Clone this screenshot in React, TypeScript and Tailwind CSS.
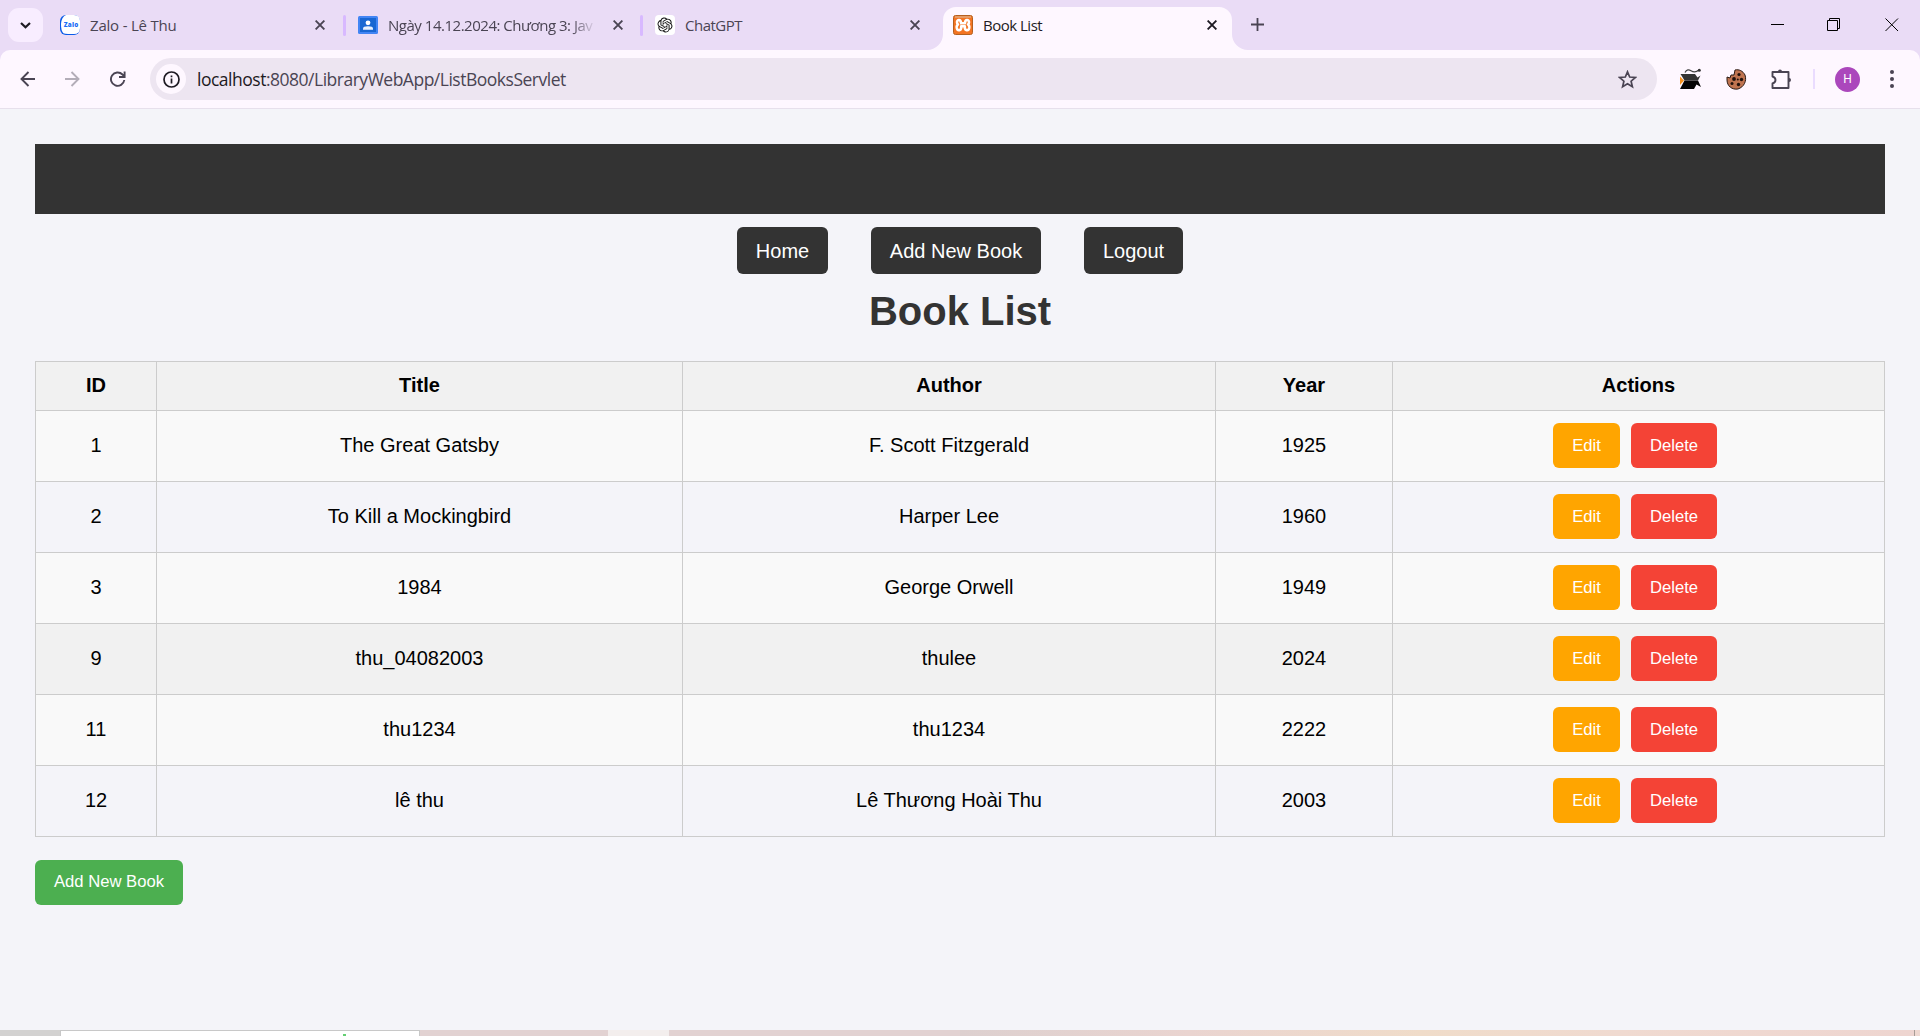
import React from "react";

const books = [
  ["1", "The Great Gatsby", "F. Scott Fitzgerald", "1925"],
  ["2", "To Kill a Mockingbird", "Harper Lee", "1960"],
  ["3", "1984", "George Orwell", "1949"],
  ["9", "thu_04082003", "thulee", "2024"],
  ["11", "thu1234", "thu1234", "2222"],
  ["12", "lê thu", "Lê Thương Hoài Thu", "2003"],
];

const rowColors = [
  "bg-[#f9f9f9]",
  "bg-[#f4f4f9]",
  "bg-[#f9f9f9]",
  "bg-[#f1f1f1]",
  "bg-[#f9f9f9]",
  "bg-[#f4f4f9]",
];

function Close({ color }: { color: string }) {
  return (
    <svg className="h-[10px] w-[10px] shrink-0" viewBox="0 0 10 10" stroke={color} strokeWidth="1.9">
      <path d="M0.6 0.6 9.4 9.4M9.4 0.6 0.6 9.4" />
    </svg>
  );
}

function ZaloIcon() {
  return (
    <svg className="h-5 w-5 shrink-0" viewBox="0 0 20 20">
      <rect width="20" height="20" rx="6" fill="#0a5be8" />
      <path d="M6 0H14Q20 0 20 6V13Q20 19 14 19H8Q5 19 3.4 18.2Q1 16 1 9Q1.500 2 6 0Z" fill="#fff" />
      <text x="3.800" y="12" fontSize="6.300" fontWeight="800" fill="#1a6df5" fontFamily="Open Sans, sans-serif" textLength="14.500">Zalo</text>
    </svg>
  );
}

function ClassroomIcon() {
  return (
    <svg className="h-5 w-5 shrink-0" viewBox="0 0 20 20">
      <rect y="1" width="20" height="18" rx="1.500" fill="#4285f4" />
      <rect x="2" y="3" width="16" height="14" fill="#1967d2" />
      <circle cx="10" cy="7.800" r="2.400" fill="#fff" />
      <path d="M5 14.800V13.500Q5 11.200 10 11.200T15 13.500V14.800Z" fill="#e8f0fe" />
    </svg>
  );
}

function ChatGptIcon() {
  return (
    <svg className="h-5 w-5 shrink-0" viewBox="0 0 20 20">
      <rect width="20" height="20" rx="4" fill="#fff" />
      <g transform="translate(2.500 2.500) scale(.625)">
        <path
          fill="#111"
          d="M22.282 9.821a5.985 5.985 0 0 0-.516-4.910 6.046 6.046 0 0 0-6.510-2.900A6.065 6.065 0 0 0 4.981 4.182a5.985 5.985 0 0 0-3.998 2.900 6.046 6.046 0 0 0 .743 7.097 5.980 5.980 0 0 0 .510 4.911 6.051 6.051 0 0 0 6.515 2.900A5.985 5.985 0 0 0 13.260 24a6.056 6.056 0 0 0 5.772-4.206 5.990 5.990 0 0 0 3.997-2.900 6.056 6.056 0 0 0-.747-7.073zM13.260 22.430a4.476 4.476 0 0 1-2.876-1.040l.141-.081 4.779-2.758a.795.795 0 0 0 .392-.681v-6.737l2.020 1.168a.071.071 0 0 1 .038.052v5.583a4.504 4.504 0 0 1-4.494 4.494zM3.600 18.304a4.470 4.470 0 0 1-.535-3.014l.142.085 4.783 2.759a.771.771 0 0 0 .780 0l5.843-3.369v2.332a.080.080 0 0 1-.033.062L9.740 19.950a4.500 4.500 0 0 1-6.140-1.646zM2.340 7.896a4.485 4.485 0 0 1 2.366-1.973V11.600a.766.766 0 0 0 .388.676l5.815 3.355-2.020 1.168a.076.076 0 0 1-.071 0l-4.830-2.786A4.504 4.504 0 0 1 2.340 7.872zm16.597 3.855l-5.833-3.387L15.119 7.200a.076.076 0 0 1 .071 0l4.830 2.791a4.494 4.494 0 0 1-.676 8.105v-5.678a.790.790 0 0 0-.407-.667zm2.010-3.023l-.141-.085-4.774-2.782a.776.776 0 0 0-.785 0L9.409 9.230V6.897a.066.066 0 0 1 .028-.061l4.830-2.787a4.500 4.500 0 0 1 6.680 4.660zm-12.640 4.135l-2.020-1.164a.080.080 0 0 1-.038-.057V6.075a4.500 4.500 0 0 1 7.375-3.453l-.142.080L8.704 5.460a.795.795 0 0 0-.393.681zm1.097-2.365l2.602-1.500 2.607 1.500v2.999l-2.597 1.500-2.607-1.500z"
        />
      </g>
    </svg>
  );
}

function XamppIcon() {
  return (
    <svg className="h-5 w-5 shrink-0" viewBox="0 0 20 20">
      <rect x=".5" y=".5" width="19" height="19" rx="2" fill="#f37423" stroke="#b5601f" />
      <path d="M2 2H18" stroke="#e59b66" strokeWidth="2" />
      <g fill="none" stroke="#fff" strokeWidth="2.600" strokeLinejoin="round">
        <path d="M8 8.200C8 4 3.800 4.300 4 7.300C4 9 5 9.500 5 9.500C3.500 10.500 3.500 11.500 3.800 13C4.600 16.500 8.200 15.500 8.200 12.500V11.200H11.800V12.500C11.800 15.500 15.400 16.500 16.200 13C16.500 11.500 16.500 10.500 15 9.500C15 9.500 16 9 16 7.300C16.200 4.300 12 4 12 8.200H7" />
      </g>
    </svg>
  );
}

function Divider() {
  return <div className="h-[21px] w-[3px] shrink-0 rounded-full bg-[#d8b9ff]" />;
}

function TabStrip() {
  return (
    <div className="flex h-[50px] bg-[#eadcf6] text-[15px] text-[#4a4453]">
      <div className="mt-2 ml-2 flex h-[34px] w-[35px] items-center justify-center rounded-[11px] bg-[#f8edff]">
        <svg className="h-[7px] w-[11px]" viewBox="0 0 11 7" fill="none" stroke="#1d1a22" strokeWidth="2.200">
          <path d="M1 1 5.500 5.300 10 1" />
        </svg>
      </div>
      <div className="ml-[17px] flex h-[50px] w-[286px] items-center">
        <ZaloIcon />
        <span className="ml-[10px] flex-1 whitespace-nowrap tracking-[-0.2px]">Zalo - Lê Thu</span>
        <Close color="#4a4453" />
        <div className="w-[18px]" />
        <Divider />
      </div>
      <div className="flex h-[50px] w-[297px] items-center pl-[12px]">
        <ClassroomIcon />
        <span className="ml-[10px] w-[208px] overflow-hidden whitespace-nowrap tracking-[-0.48px] [mask-image:linear-gradient(to_right,black_88%,transparent)]">
          Ngày 14.12.2024: Chương 3: Jav
        </span>
        <div className="w-[17px]" />
        <Close color="#4a4453" />
        <div className="w-[17px]" />
        <Divider />
      </div>
      <div className="flex h-[50px] w-[300px] items-center pl-[12px]">
        <ChatGptIcon />
        <span className="ml-[10px] w-[225px] tracking-[-0.5px]">ChatGPT</span>
        <Close color="#4a4453" />
      </div>
      <div className="relative mt-[7px] flex h-[43px] w-[289px] items-center rounded-t-[13px] bg-[#fef7ff] pb-[7px] pl-[10px] text-[#1d1a22]">
        <svg className="absolute bottom-0 -left-4 h-4 w-4" viewBox="0 0 16 16" fill="#fef7ff">
          <path d="M16 0V16H0A16 16 0 0 0 16 0Z" />
        </svg>
        <svg className="absolute -right-4 bottom-0 h-4 w-4" viewBox="0 0 16 16" fill="#fef7ff">
          <path d="M0 0V16H16A16 16 0 0 1 0 0Z" />
        </svg>
        <XamppIcon />
        <span className="ml-[10px] flex-1 tracking-[-0.5px]">Book List</span>
        <Close color="#1d1a22" />
        <div className="w-[15px]" />
      </div>
      <svg className="mt-[18px] ml-[19px] h-[13px] w-[13px]" viewBox="0 0 13 13" stroke="#4a4453" strokeWidth="1.800">
        <path d="M6.500 0V13M0 6.500H13" />
      </svg>
      <div className="flex-1" />
      <div className="mr-[21px] flex h-[50px] items-center">
        <svg className="h-[14px] w-[128px]" viewBox="0 0 128 14" fill="none" stroke="#000" strokeWidth="1">
          <path d="M0 6.500H13" />
          <path d="M56.500 2.500H66.500V12.500H56.500ZM58.500 2.500V.5H68.500V10.500H66.500" />
          <path d="M114.500 .5 127 13M127 .5 114.500 13" />
        </svg>
      </div>
    </div>
  );
}

function Toolbar() {
  return (
    <div className="bg-[#eadcf6]">
      <div className="flex h-[59px] items-center rounded-t-[10px] border-b border-[#e7e0ec] bg-[#fef7ff]">
        <svg className="ml-5 h-4 w-[106px]" viewBox="0 0 106 16" fill="none" strokeWidth="1.900">
          <path d="M15 8H1.500M8.500 1 1.500 8 8.500 15" stroke="#4a4453" />
          <path d="M45 8H58.500M51.500 1 58.500 8 51.500 15" stroke="#b3adb8" />
          <path d="M104.300 9A6.700 6.700 0 1 1 102.500 3.500L104.500 5.500M104.600 .5V6H99" stroke="#4a4453" />
        </svg>
        <div className="ml-6 flex h-[42px] w-[1507px] items-center rounded-full bg-[#ede5f1] pr-5 pl-[6px]">
          <div className="flex h-[30px] w-[30px] items-center justify-center rounded-full bg-[#fef7ff]">
            <svg className="h-[17px] w-[17px]" viewBox="0 0 17 17" fill="none" stroke="#1d1a22" strokeWidth="1.700">
              <circle cx="8.500" cy="8.500" r="7.500" />
              <path d="M8.500 7.500V12.500M8.500 4.500V6.200" />
            </svg>
          </div>
          <span className="ml-[11px] flex-1 text-[17.5px] tracking-[-0.49px] text-[#4a4453]">
            <span className="text-[#1d1a22]">localhost</span>:8080/LibraryWebApp/ListBooksServlet
          </span>
          <svg className="h-[19px] w-[19px]" viewBox="0 0 19 19" fill="none" stroke="#4a4453" strokeWidth="1.700">
            <path d="M9.500 1.800 11.700 7 17.300 7.500 13.100 11.200 14.400 16.700 9.500 13.800 4.600 16.700 5.900 11.200 1.700 7.500 7.300 7Z" />
          </svg>
        </div>
        <svg className="ml-[23px] h-[22px] w-[22px]" viewBox="0 0 22 22">
          <path d="M0 8.500 4 12.500 0 17Z" fill="#f7931e" />
          <path d="M4.500 12.500H18L21 19 16.500 16.500 14 21H0Z" fill="#050505" />
          <path d="M.5 6H15L17.500 9.500 20.500 7.500 18 12.500H4.500Z" fill="#333" />
          <path d="M5 4.500C6.500 1.200 9 1.300 11 2.700S16 4.500 19 2" fill="none" stroke="#444" strokeWidth="1.200" />
          <circle cx="19.300" cy="2.200" r="1.500" fill="#333" />
        </svg>
        <svg className="ml-6 h-[21px] w-[21px]" viewBox="0 0 21 21">
          <path d="M9 1C13 0 17 2 19 6C21 12 18 18 12 20C6 21 1 17 1 11V8L4 9 5 6 8 6Z" fill="#bf7450" stroke="#2b1a14" strokeWidth="1" />
          <g fill="#20110c">
            <circle cx="13" cy="5.500" r="1.600" />
            <circle cx="8" cy="10" r="1.900" />
            <circle cx="15.500" cy="10.500" r="1.700" />
            <circle cx="6" cy="14.500" r="1.500" />
            <circle cx="12.500" cy="15.500" r="1.700" />
            <circle cx="11.800" cy="10.500" r="1" />
          </g>
        </svg>
        <svg className="ml-[24px] h-[21px] w-[21px]" viewBox="0 0 21 21" fill="none" stroke="#4a4453" strokeWidth="1.900" strokeLinejoin="round">
          <path d="M1.500 3H17.500V19H1.500V14.500Q4.500 13.500 4.500 11T1.500 7.500Z" />
          <path d="M7 2.500A2 2 0 0 1 11 2.500ZM18 9A2 2 0 0 1 18 13Z" fill="#4a4453" stroke="none" />
        </svg>
        <div className="ml-[21px] h-5 w-[2px] bg-[#eadcff]" />
        <div className="ml-5 flex h-[25px] w-[25px] items-center justify-center rounded-full bg-[#ab47bc] font-[Roboto] text-[12px] text-white">
          H
        </div>
        <svg className="ml-[30px] h-[18px] w-1" viewBox="0 0 4 18" fill="#4a4453">
          <circle cx="2" cy="2" r="2" />
          <circle cx="2" cy="9" r="2" />
          <circle cx="2" cy="16" r="2" />
        </svg>
      </div>
    </div>
  );
}

export default function App() {
  const cell = "border-r border-b border-[#cccccc] p-0 pb-[2px]";
  return (
    <div className="flex h-[1036px] w-[1920px] flex-col overflow-hidden bg-[#f4f4f9] font-['Open_Sans',sans-serif]">
      <TabStrip />
      <Toolbar />
      <main className="flex-1 px-[35px] pt-[35px] font-['Liberation_Sans',sans-serif] text-[20px] leading-[23px] text-black">
        <div className="h-[70px] bg-[#333333]" />
        <nav className="mt-[13px] flex justify-center gap-[43px] text-white">
          <a className="flex h-[47px] w-[91px] items-center justify-center rounded-[6px] bg-[#333333] pt-[2px]">Home</a>
          <a className="flex h-[47px] w-[170px] items-center justify-center rounded-[6px] bg-[#333333] pt-[2px]">Add New Book</a>
          <a className="flex h-[47px] w-[99px] items-center justify-center rounded-[6px] bg-[#333333] pt-[2px]">Logout</a>
        </nav>
        <h1 className="mt-[14px] text-center text-[40px] leading-[46px] font-bold text-[#333333]">Book List</h1>
        <table className="mt-[27px] w-[1850px] table-fixed border-separate border-spacing-0 border-t border-l border-[#cccccc] text-center">
          <colgroup>
            <col className="w-[121px]" />
            <col className="w-[526px]" />
            <col className="w-[533px]" />
            <col className="w-[177px]" />
            <col />
          </colgroup>
          <thead>
            <tr className="h-[49px] bg-[#f1f1f1]">
              {["ID", "Title", "Author", "Year", "Actions"].map((h) => (
                <th key={h} className={cell}>{h}</th>
              ))}
            </tr>
          </thead>
          <tbody>
            {books.map((b, i) => (
              <tr key={b[0]} className={"h-[71px] " + rowColors[i]}>
                {b.map((v, j) => (
                  <td key={j} className={cell}>{v}</td>
                ))}
                <td className={cell}>
                  <div className="flex justify-center gap-[11px] pr-[7px] text-[16.67px] text-white">
                    <a className="flex h-[45px] w-[67px] items-center justify-center rounded-[6px] bg-[#ffa500]">Edit</a>
                    <a className="flex h-[45px] w-[86px] items-center justify-center rounded-[6px] bg-[#f44336]">Delete</a>
                  </div>
                </td>
              </tr>
            ))}
          </tbody>
        </table>
        <a className="mt-[23px] flex h-[45px] w-[148px] items-center justify-center rounded-[6px] bg-[#4caf50] pb-[2px] text-[16.67px] text-white">
          Add New Book
        </a>
      </main>
      <footer className="flex h-[6px]">
        <div className="w-[60px] bg-[#d3d2d1]" />
        <div className="flex w-[360px] border border-b-0 border-[#c8c8c8] bg-white pt-[3px] pl-[282px]">
          <div className="h-[3px] w-[3px] bg-[#63cf72]" />
        </div>
        <div className="w-[188px] bg-[#e2d2d2]" />
        <div className="w-[61px] bg-[#f3eeed]" />
        <div className="w-[291px] bg-[#e2d2d2]" />
        <div className="w-[460px] bg-linear-to-r from-[#ddd0cf] via-[#ead4d0] via-50% to-[#f0dcc9]" />
        <div className="w-[494px] bg-linear-to-r from-[#f0dcc9] via-[#f0dad0] via-40% to-[#eed5d0]" />
        <div className="w-px bg-[#a79c96]" />
        <div className="w-[5px] bg-[#eed8d0]" />
      </footer>
    </div>
  );
}
